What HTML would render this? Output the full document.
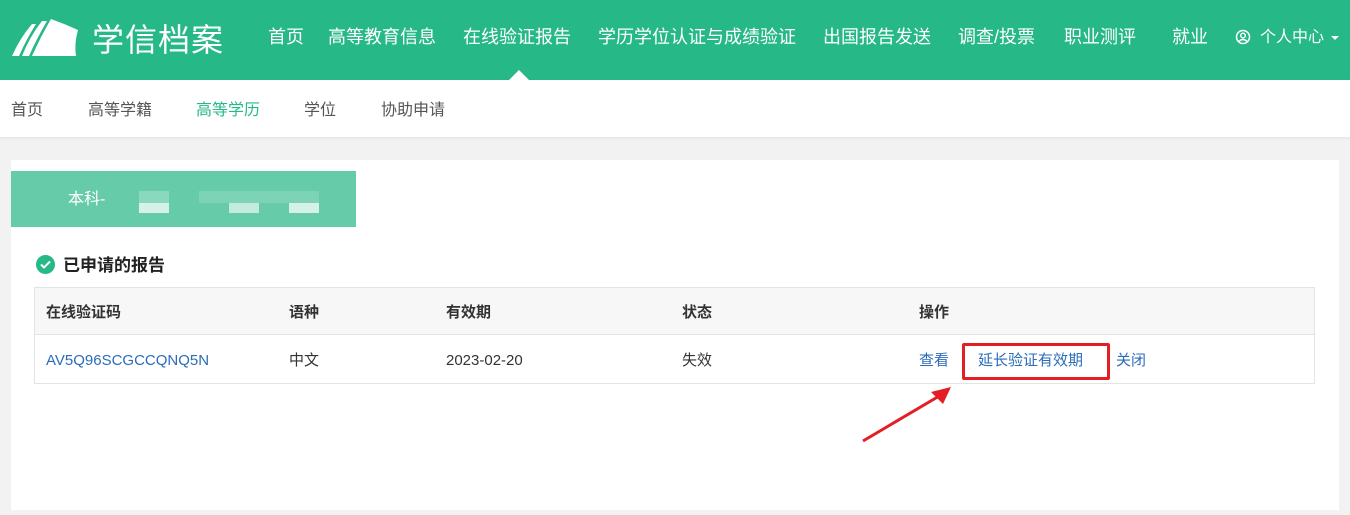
<!DOCTYPE html>
<html><head><meta charset="utf-8"><style>
*{margin:0;padding:0;box-sizing:border-box}
body{width:1350px;height:515px;background:#f2f2f2;font-family:"Liberation Sans","Noto Sans CJK SC",sans-serif;position:relative;overflow:hidden}
.top{position:absolute;left:0;top:0;width:1350px;height:80px;background:#26b887}
.top span{position:absolute;top:25px;line-height:24px;color:#fff;font-size:18px;white-space:nowrap}
.logo{position:absolute;left:92px;top:18px;line-height:44px;color:#fff;font-size:32px;letter-spacing:1px}
.sub{position:absolute;left:0;top:80px;width:1350px;height:57px;background:#fff;box-shadow:0 1px 3px rgba(0,0,0,.08)}
.sub span{position:absolute;top:20px;line-height:22px;font-size:16px;color:#555}
.card{position:absolute;left:11px;top:160px;width:1328px;height:350px;background:#fff}
.tab{position:absolute;left:0;top:11px;width:345px;height:56px;background:#66cba9}
.t{position:absolute;font-size:15px;line-height:20px;color:#333;white-space:nowrap}
.link{color:#2b6cb8}
</style></head><body>
<div class="top">
<svg style="position:absolute;left:10px;top:16px" width="70" height="42" viewBox="0 0 70 42"><path d="M2 40 Q10 22 22 8 L26 8 Q16 24 9 40Z M12 40 Q20 20 32 5 L37 5 Q27 22 19 40Z M22 40 Q32 18 41 3 Q55 8 68 14 Q64 28 66 40Z" fill="#fff"/></svg>
<div class="logo">学信档案</div>
<span style="left:268px">首页</span>
<span style="left:328px">高等教育信息</span>
<span style="left:463px">在线验证报告</span>
<span style="left:598px">学历学位认证与成绩验证</span>
<span style="left:823px">出国报告发送</span>
<span style="left:958px">调查/投票</span>
<span style="left:1064px">职业测评</span>
<span style="left:1172px">就业</span>
<svg style="position:absolute;left:1235px;top:29px" width="16" height="16" viewBox="0 0 16 16"><circle cx="8" cy="8" r="6.5" fill="none" stroke="#fff" stroke-width="1.5"/><circle cx="8" cy="6.5" r="2.3" fill="none" stroke="#fff" stroke-width="1.4"/><path d="M3.8 12.5Q8 8.5 12.2 12.5" fill="none" stroke="#fff" stroke-width="1.4"/></svg>
<span style="left:1260px;font-size:16px;top:26px">个人中心</span>
<div style="position:absolute;left:1331px;top:36px;border:4px solid transparent;border-top:4px solid #fff"></div>
<div style="position:absolute;left:509px;top:70px;border:10px solid transparent;border-bottom:10px solid #fff;border-top:0"></div>
</div>
<div class="sub">
<span style="left:11px">首页</span><span style="left:88px">高等学籍</span><span style="left:196px;color:#26b887">高等学历</span><span style="left:304px">学位</span><span style="left:381px">协助申请</span>
</div>
<div class="card">
<div class="tab">
<div style="position:absolute;left:57px;top:18px;line-height:22px;color:#fff;font-size:16px">本科-</div>
<div style="position:absolute;left:128px;top:20px;width:30px;height:22px;background:#8ad8be"></div>
<div style="position:absolute;left:128px;top:32px;width:30px;height:10px;background:#d6f1e7"></div>
<div style="position:absolute;left:218px;top:32px;width:30px;height:10px;background:#c4ebdd"></div>
<div style="position:absolute;left:278px;top:32px;width:30px;height:10px;background:#d6f1e7"></div>
<div style="position:absolute;left:188px;top:20px;width:120px;height:12px;background:#7dd3b6"></div>
</div>
<svg style="position:absolute;left:25px;top:95px" width="19" height="19"><circle cx="9.5" cy="9.5" r="9.5" fill="#26b887"/><path d="M5 9.5l3 3 6-6" stroke="#fff" stroke-width="2" fill="none"/></svg>
<div class="t" style="left:52px;top:95px;font-size:17px;line-height:22px;font-weight:bold;color:#222">已申请的报告</div>
<div style="position:absolute;left:23px;top:127px;width:1281px;height:97px;border:1px solid #e3e3e3">
<div style="height:47px;background:#f7f7f7;border-bottom:1px solid #e3e3e3"></div>
</div>
<div class="t" style="left:35px;top:143px;font-weight:bold">在线验证码</div>
<div class="t" style="left:278px;top:143px;font-weight:bold">语种</div>
<div class="t" style="left:435px;top:143px;font-weight:bold">有效期</div>
<div class="t" style="left:671px;top:143px;font-weight:bold">状态</div>
<div class="t" style="left:908px;top:143px;font-weight:bold">操作</div>
<div class="t link" style="left:35px;top:191px">AV5Q96SCGCCQNQ5N</div>
<div class="t" style="left:278px;top:191px">中文</div>
<div class="t" style="left:435px;top:191px">2023-02-20</div>
<div class="t" style="left:671px;top:191px">失效</div>
<div class="t link" style="left:908px;top:191px">查看</div>
<div class="t link" style="left:967px;top:191px">延长验证有效期</div>
<div class="t link" style="left:1105px;top:191px">关闭</div>
<div style="position:absolute;left:951px;top:183px;width:148px;height:37px;border:3px solid #e41e25;border-radius:2px"></div>
<svg style="position:absolute;left:840px;top:220px" width="110" height="65"><path d="M12 61L95 12" stroke="#e41e25" stroke-width="3"/><path d="M100 7L80 12L92 24Z" fill="#e41e25"/></svg>
</div>
</body></html>
